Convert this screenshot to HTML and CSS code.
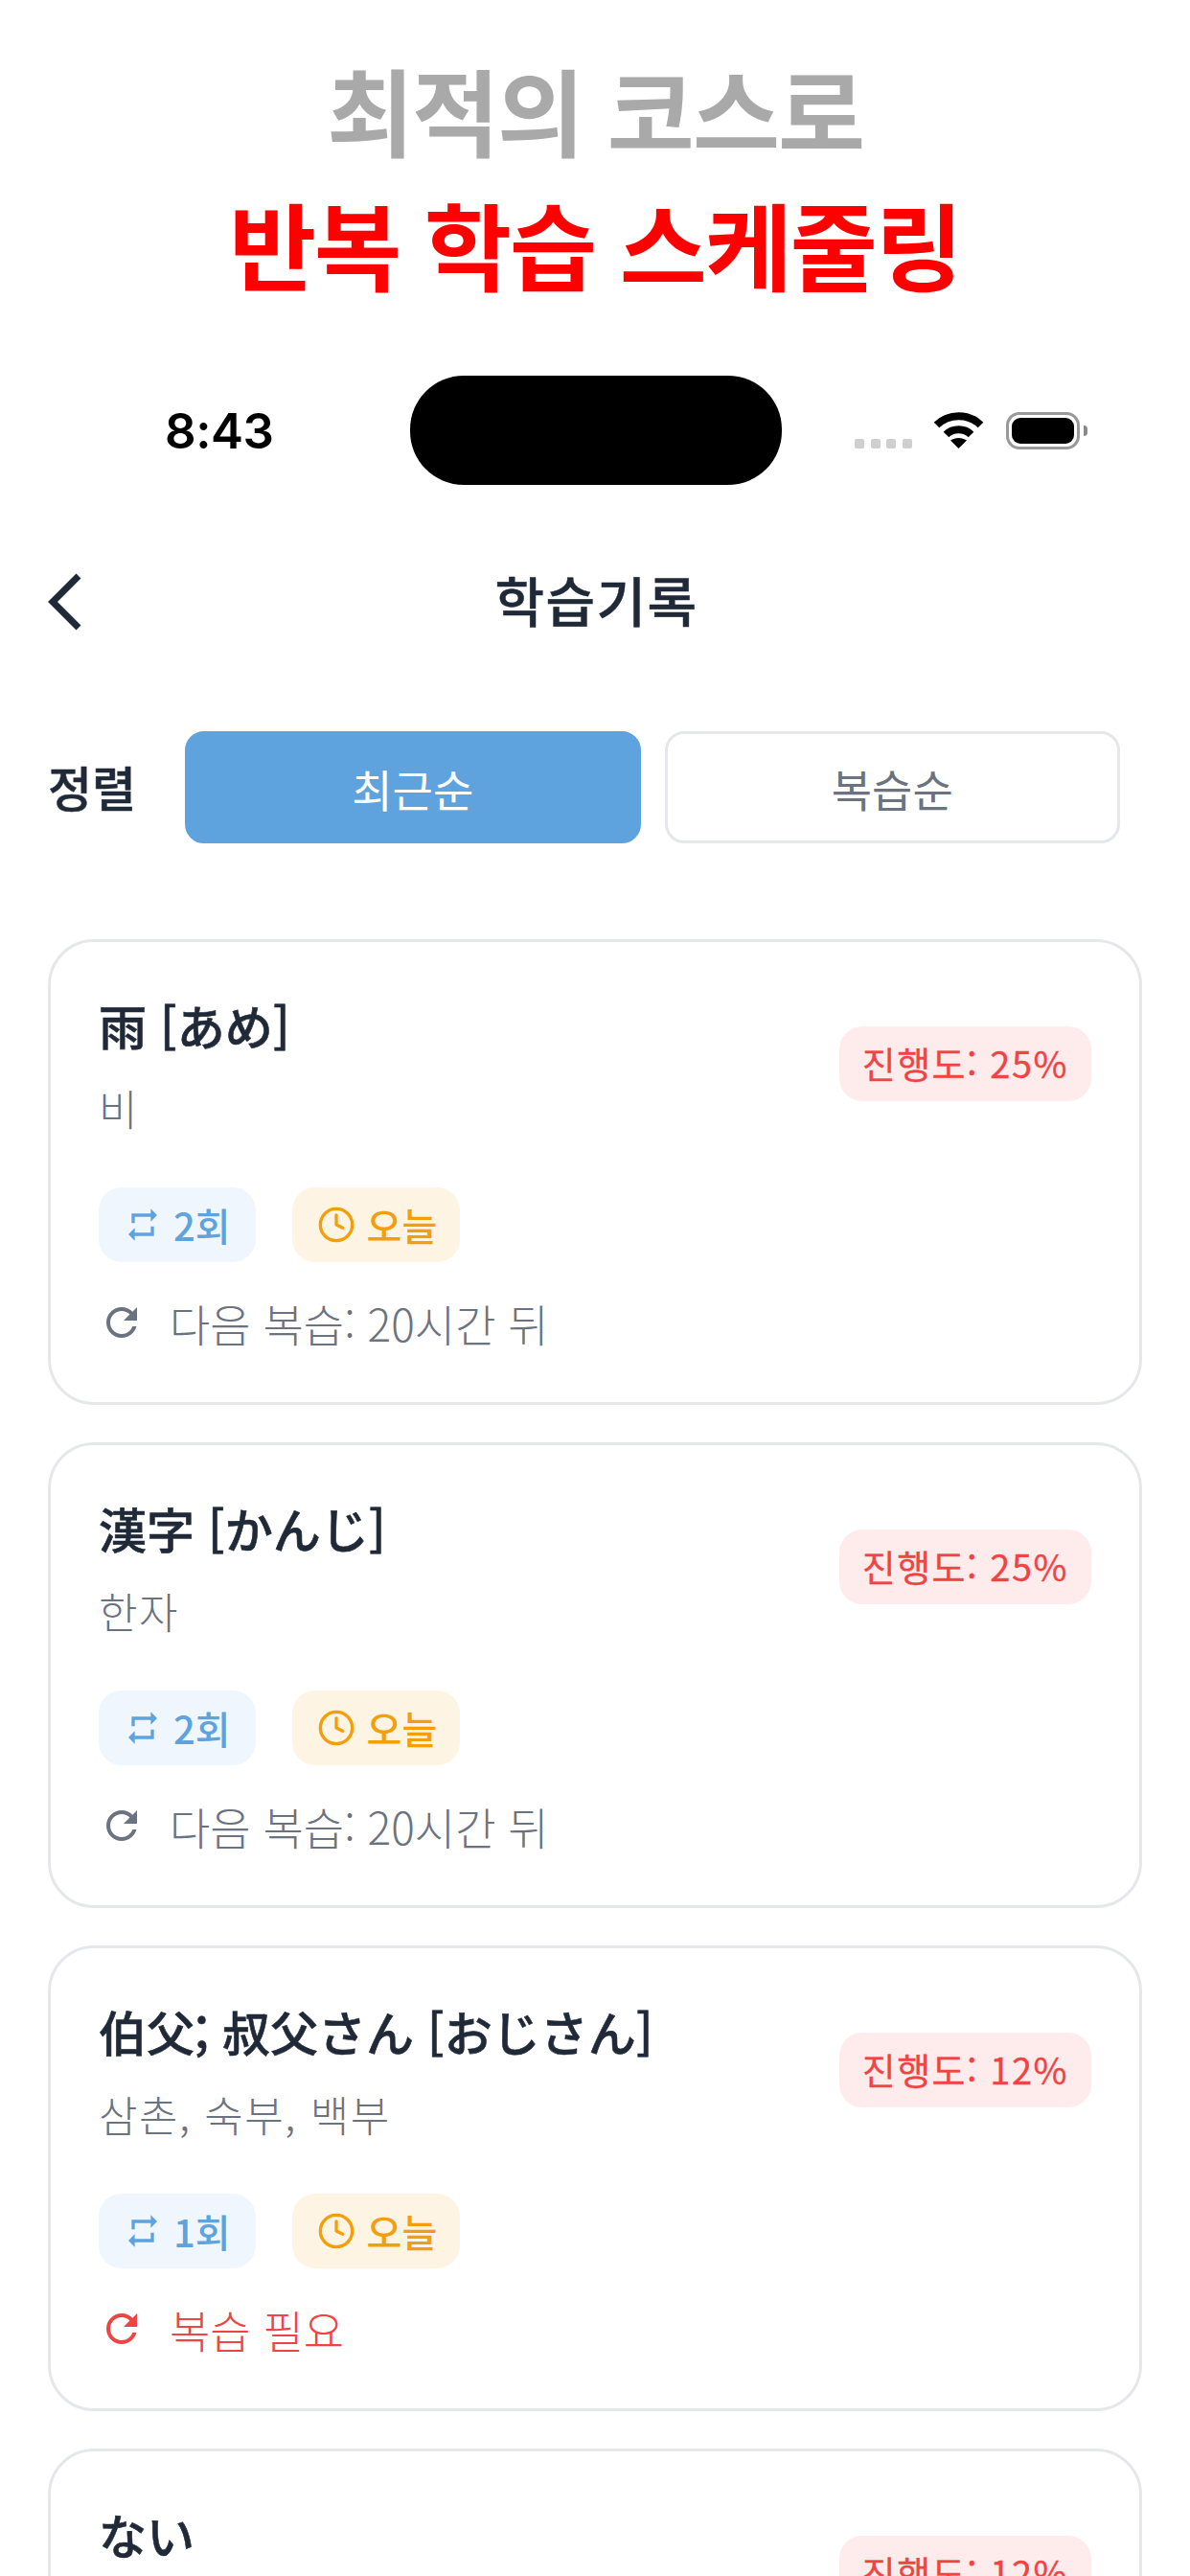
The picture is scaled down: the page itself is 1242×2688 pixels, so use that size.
FILE: index.html
```html
<!DOCTYPE html>
<html lang="ko">
<head>
<meta charset="utf-8">
<title>학습기록</title>
<link rel="stylesheet" href="styles.css">
</head>
<body>
<svg class="defs" width="0" height="0" aria-hidden="true">
  <symbol id="i-repeat" viewBox="0 0 24 24"><path d="M7 7h10v3l4-4-4-4v3H5v6h2V7zm10 10H7v-3l-4 4 4 4v-3h12v-6h-2v4z"/></symbol>
  <symbol id="i-clock" viewBox="0 0 24 24"><circle cx="12" cy="12" r="10" fill="none" stroke="currentColor" stroke-width="2"/><path d="M12 6v6l4 2" fill="none" stroke="currentColor" stroke-width="2" stroke-linecap="round" stroke-linejoin="round"/></symbol>
  <symbol id="i-refresh" viewBox="0 0 24 24"><path d="M17.65 6.35C16.2 4.9 14.21 4 12 4c-4.42 0-7.99 3.58-7.99 8s3.57 8 7.99 8c3.73 0 6.84-2.55 7.73-6h-2.08c-.82 2.33-3.04 4-5.65 4-3.31 0-6-2.69-6-6s2.69-6 6-6c1.66 0 3.14.69 4.22 1.78L13 11h7V4l-2.35 2.35z"/></symbol>
</svg>
<main class="page">
  <header class="promo">
    <h1 class="promo-sub">최적의 코스로</h1>
    <h2 class="promo-main">반복 학습 스케줄링</h2>
  </header>

  <div class="status">
    <span class="time">8:43</span>
    <span class="island"></span>
    <div class="status-icons">
      <span class="signal"><i></i><i></i><i></i><i></i></span>
      <svg class="wifi" viewBox="0 0 53 38"><path d="M3.500 13.500C16 1 37 1 49.500 13.500M13.500 23.500C20.500 16.500 32.500 16.500 39.500 23.500" fill="none" stroke="#000" stroke-width="8"/><path d="M18 29.500C23 26 30 26 35 29.500L26.500 38z"/></svg>
      <span class="battery"><i class="battery-fill"></i></span>
      <span class="battery-cap"></span>
    </div>
  </div>

  <nav class="topbar">
    <svg class="back" viewBox="0 0 36 60"><path d="M32 3 5 30l27 27" fill="none" stroke="#1f2937" stroke-width="7"/></svg>
    <span class="topbar-title">학습기록</span>
  </nav>

  <div class="sort">
    <span class="sort-label">정렬</span>
    <button class="sort-btn active">최근순</button>
    <button class="sort-btn">복습순</button>
  </div>

  <section class="list">
    <article class="card">
      <div class="card-head">
        <div class="words">
          <div class="word">雨 [あめ]</div>
          <div class="meaning">비</div>
        </div>
        <span class="progress">진행도: 25%</span>
      </div>
      <div class="chips">
        <span class="chip chip-count"><svg class="chip-icon"><use href="#i-repeat"/></svg>2회</span>
        <span class="chip chip-today"><svg class="chip-icon"><use href="#i-clock"/></svg>오늘</span>
      </div>
      <div class="next"><svg class="next-icon"><use href="#i-refresh"/></svg>다음 복습: 20시간 뒤</div>
    </article>

    <article class="card">
      <div class="card-head">
        <div class="words">
          <div class="word">漢字 [かんじ]</div>
          <div class="meaning">한자</div>
        </div>
        <span class="progress">진행도: 25%</span>
      </div>
      <div class="chips">
        <span class="chip chip-count"><svg class="chip-icon"><use href="#i-repeat"/></svg>2회</span>
        <span class="chip chip-today"><svg class="chip-icon"><use href="#i-clock"/></svg>오늘</span>
      </div>
      <div class="next"><svg class="next-icon"><use href="#i-refresh"/></svg>다음 복습: 20시간 뒤</div>
    </article>

    <article class="card">
      <div class="card-head">
        <div class="words">
          <div class="word">伯父; 叔父さん [おじさん]</div>
          <div class="meaning">삼촌, 숙부, 백부</div>
        </div>
        <span class="progress">진행도: 12%</span>
      </div>
      <div class="chips">
        <span class="chip chip-count"><svg class="chip-icon"><use href="#i-repeat"/></svg>1회</span>
        <span class="chip chip-today"><svg class="chip-icon"><use href="#i-clock"/></svg>오늘</span>
      </div>
      <div class="next next-due"><svg class="next-icon"><use href="#i-refresh"/></svg>복습 필요</div>
    </article>

    <article class="card">
      <div class="card-head">
        <div class="words">
          <div class="word">ない</div>
          <div class="meaning">&nbsp;</div>
        </div>
        <span class="progress">진행도: 12%</span>
      </div>
    </article>
  </section>
</main>
</body>
</html>
```
FILE: styles.css
```css
* { box-sizing: border-box; }
html, body {
  margin: 0;
  height: 2688px;
  overflow: hidden;
  background: #fff;
}
body {
  font-family: "Noto Sans CJK KR", "Noto Sans", sans-serif;
  color: #1f2937;
}
.defs { position: absolute; }
.page { display: flex; flex-direction: column; }

.promo { display: flex; flex-direction: column; align-items: center; padding-top: 43px; }
.promo-sub, .promo-main { margin: 0; font-size: 99px; line-height: 140px; font-weight: 700; letter-spacing: -2px; }
.promo-sub { color: #a9a9a9; }
.promo-main { color: #ff0000; }

.status {
  display: flex;
  align-items: center;
  margin-top: 69px;
  height: 114px;
  padding-left: 172px;
}
.time { font-family: Inter, sans-serif; font-weight: 600; font-size: 51px; letter-spacing: -0.5px; color: #000; width: 256px; }
.island { width: 388px; height: 114px; background: #000; border-radius: 56px; }
.status-icons { display: flex; align-items: flex-start; height: 40px; margin-top: 2px; margin-left: 76px; }
.signal { display: flex; gap: 6.500px; margin-top: 28px; margin-right: 22px; }
.signal i { width: 10px; height: 10px; background: #cfcfcf; border-radius: 2px; }
.wifi { width: 53px; height: 38px; margin-right: 23px; }
.battery { display: flex; width: 77px; height: 39px; padding: 3px; border: 3px solid #999; border-radius: 14px; }
.battery-fill { flex: 1; background: #000; border-radius: 9px; }
.battery-cap { width: 4px; height: 11px; margin: 14px 0 0 4px; background: #888; border-radius: 0 4px 4px 0; }

.topbar { position: relative; display: flex; align-items: center; justify-content: center; height: 100px; margin-top: 70px; }
.back { position: absolute; left: 50px; top: 22px; width: 36px; height: 60px; }
.topbar-title { font-size: 56px; font-weight: 500; -webkit-text-stroke: 0.5px #1f2937; line-height: 100px; letter-spacing: 1.500px; margin: -3px 0 0 3px; }

.sort { display: flex; align-items: center; gap: 25px; margin-top: 87px; padding: 0 73px 0 50px; }
.sort-label { font-size: 50px; font-weight: 500; -webkit-text-stroke: 0.5px #1f2937; width: 118px; margin-top: -4px; }
.sort-btn {
  flex: 1;
  height: 117px;
  padding: 0;
  font: inherit;
  font-size: 46px;
  color: #6b7280;
  background: #fff;
  border: 3px solid #e5e7eb;
  border-radius: 20px;
}
.sort-btn.active { color: #fff; background: #5fa3de; border-color: #5fa3de; }

.list { display: flex; flex-direction: column; gap: 39px; margin-top: 100px; padding: 0 50px; }
.card { display: flex; flex-direction: column; min-height: 486px; padding: 46px 50px 0; border: 3px solid #e5e7eb; border-radius: 48px; background: #fff; }
.card-head { display: flex; align-items: center; justify-content: space-between; }
.words { display: flex; flex-direction: column; }
.word { font-size: 50px; font-weight: 500; -webkit-text-stroke: 0.6px #1f2937; line-height: 80px; }
.meaning { margin-top: 12px; font-size: 44px; font-weight: 300; line-height: 70px; letter-spacing: 1.500px; color: #6b7280; }
.progress { padding: 0 24px; height: 78px; line-height: 76px; font-size: 38px; font-weight: 400; -webkit-text-stroke: 0.3px #ef4444; color: #ef4444; background: #feecec; border-radius: 24px; letter-spacing: 1.500px; }

.chips { display: flex; gap: 38px; margin-top: 48px; }
.chip { display: flex; align-items: center; gap: 12px; height: 78px; padding: 0 26px; font-size: 40px; font-weight: 500; border-radius: 24px; }
.chip-icon { width: 40px; height: 40px; fill: currentColor; }
.chip-count { color: #5fa3de; background: #eff6fd; }
.chip-today { padding-right: 24px; color: #f59e0b; background: #fef4e4; }

.next { display: flex; align-items: center; gap: 26px; margin-top: 28px; height: 70px; font-size: 46px; font-weight: 300; color: #6b7280; }
.next-icon { width: 48px; height: 48px; fill: currentColor; }
.next-due { color: #ef4444; }
```
